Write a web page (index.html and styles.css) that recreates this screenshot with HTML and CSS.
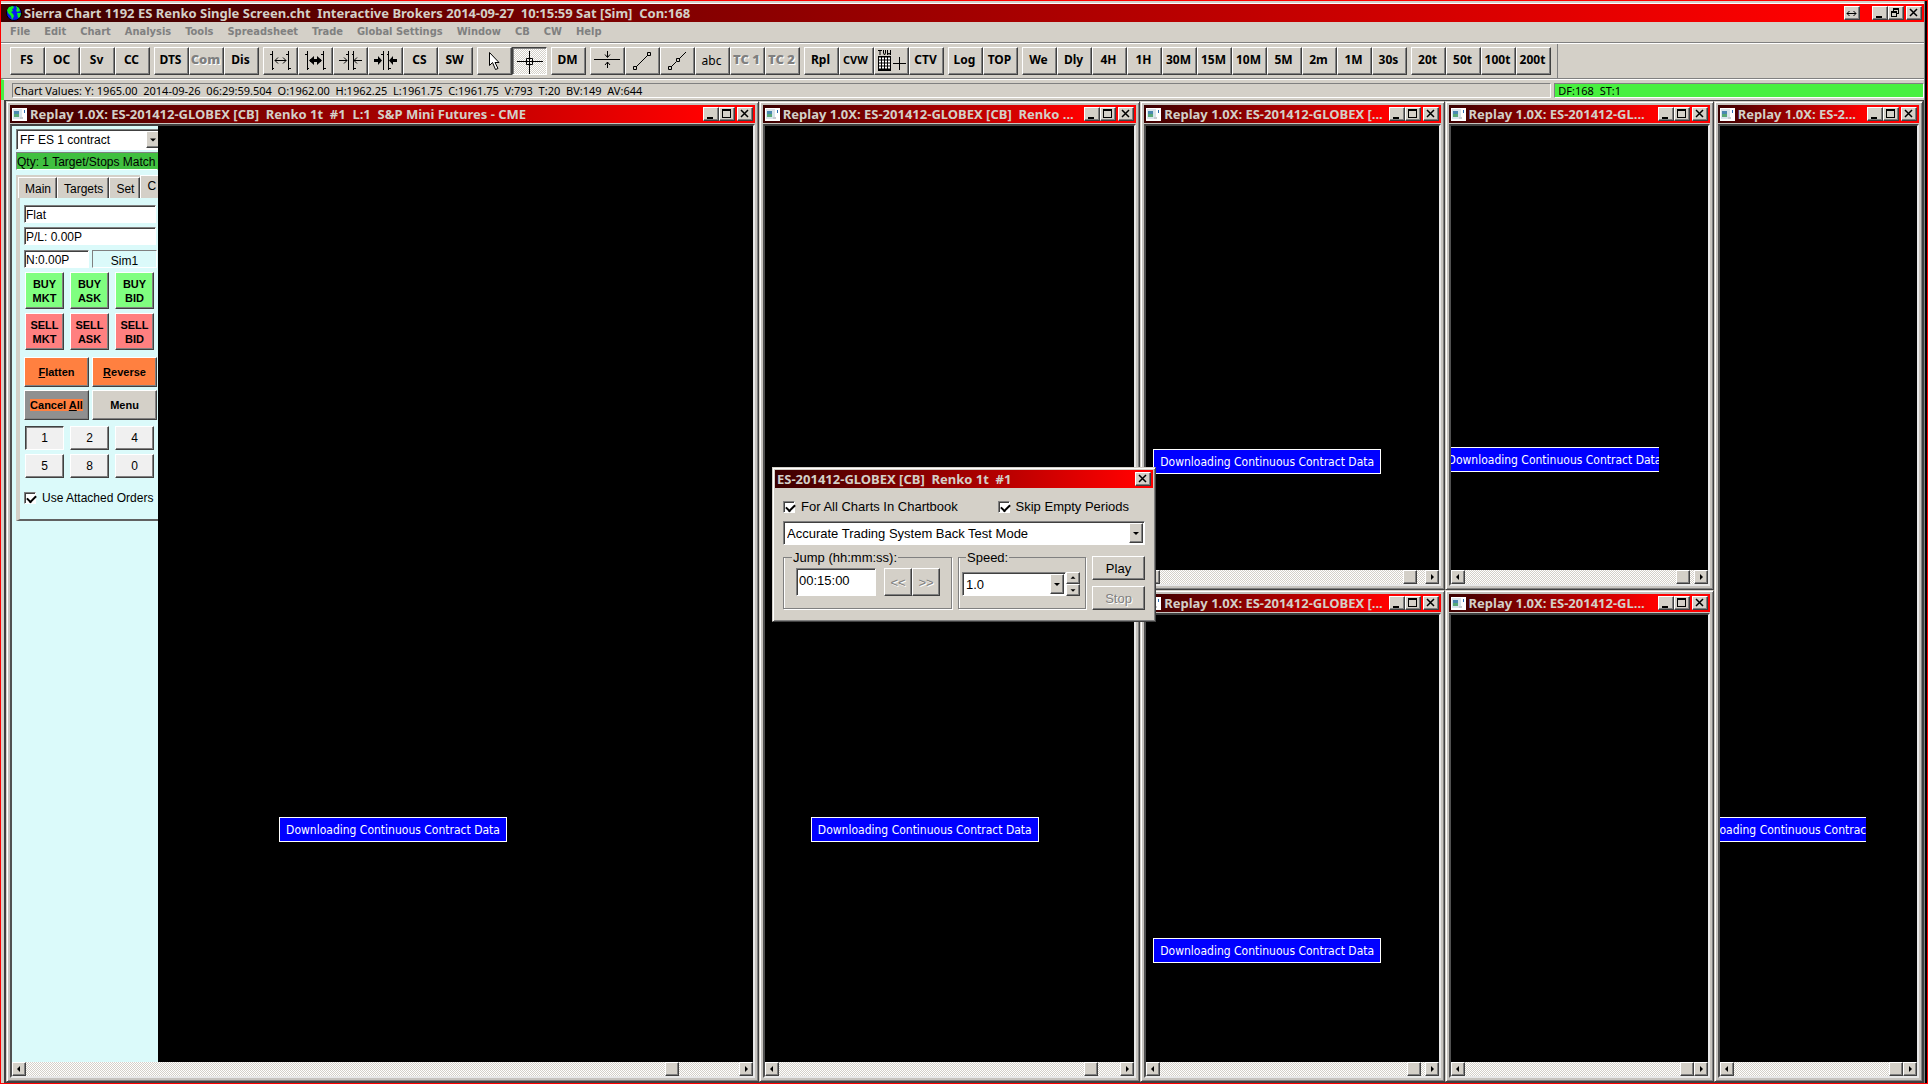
FILE: index.html
```
<!DOCTYPE html>
<html lang="en">
<head>
    <meta charset="UTF-8">
    <meta name="viewport" content="width=device-width, initial-scale=1.0">
    <title>Sierra Chart</title>
    <link rel="stylesheet" href="styles.css">
</head>
<body>
    <!-- shared icons -->
    <svg class="defs" width="0" height="0">
        <symbol id="min" viewBox="0 0 14 12"><path d="M3 9h6v2H3z"/></symbol>
        <symbol id="max" viewBox="0 0 14 12"><path d="M2 1h9v9H2zM3 3v6h7V3z" fill-rule="evenodd"/></symbol>
        <symbol id="restore" viewBox="0 0 14 12"><path d="M4 1h6v6H8v3H2V4h2zM5 3v1h3v2h1V3zM3 6v3h4V6z" fill-rule="evenodd"/></symbol>
        <symbol id="close" viewBox="0 0 14 12"><path d="M3 2l7 7M10 2l-7 7" stroke="#000" stroke-width="1.500"/></symbol>
        <symbol id="doc" viewBox="0 0 15 13"><path fill="#fff" d="M0 0h15v13H0z"/><path fill="#d8e4ec" d="M1 1h9v10H1z"/><path fill="#4a88b0" d="M2 3h5v4H2z"/><path fill="#58a878" d="M2 6h5v3H2z"/><path fill="#2c6cb0" d="M12 2h1v3h-1z"/><path fill="#c8ccd0" d="M8 9h3v2H8z"/></symbol>
        <symbol id="left" viewBox="0 0 12 12"><path d="M7 3v6L4 6z"/></symbol>
        <symbol id="right" viewBox="0 0 12 12"><path d="M5 3v6l3-3z"/></symbol>
        <symbol id="down" viewBox="0 0 12 12"><path d="M3 5h6L6 8z"/></symbol>
        <symbol id="up" viewBox="0 0 12 12"><path d="M3 7h6L6 4z"/></symbol>
    </svg>

    <div class="app">
        <header class="app-title">
            <svg class="globe" viewBox="0 0 16 16"><circle cx="8" cy="8" r="7.5" fill="#0818f0" stroke="#000"/><path fill="#10f020" d="M3 2l4-1 1 2-2 1 1 2-2 1 2 2 1 2-2 4-1-4-3-3-1-3zM10 1l3 2 1 3-3 1-1-2 1-1zM11 8l4 0-1 4-2 1z"/></svg>
            <h1>Sierra Chart 1192 ES Renko Single Screen.cht&nbsp; Interactive Brokers 2014-09-27&nbsp; 10:15:59 Sat [Sim]&nbsp; Con:168</h1>
            <button class="cap swap" aria-label="Move"><svg viewBox="0 0 14 12"><path d="M2 6.500h9M4.500 4L2 6.500 4.500 9M8.500 4L11 6.500 8.500 9" fill="none" stroke="#000"/></svg></button>
            <button class="cap" aria-label="Minimize"><svg><use href="#min"/></svg></button>
            <button class="cap" aria-label="Restore"><svg><use href="#restore"/></svg></button>
            <button class="cap last" aria-label="Close"><svg><use href="#close"/></svg></button>
        </header>

        <nav class="menu">
            <button>File</button>
            <button>Edit</button>
            <button>Chart</button>
            <button>Analysis</button>
            <button>Tools</button>
            <button>Spreadsheet</button>
            <button>Trade</button>
            <button>Global Settings</button>
            <button>Window</button>
            <button>CB</button>
            <button>CW</button>
            <button>Help</button>
        </nav>

        <div class="toolbar">
            <div class="tools">
                <button>FS</button><button>OC</button><button>Sv</button><button>CC</button>
            </div>
            <div class="tools">
                <button>DTS</button><button class="heavy" disabled>Com</button><button>Dis</button>
            </div>
            <div class="tools">
                <button aria-label="Widen bars"><svg viewBox="0 0 33 26"><path d="M6 6.500h2M8.500 3v19M8 20.500h2M22 6.500h2M24.500 3v19M25 20.500h2M11 12.500h11M14 9.500l-3 3 3 3M19 9.500l3 3-3 3"/></svg></button>
                <button aria-label="Widen bars fast"><svg viewBox="0 0 33 26"><path d="M6 6.500h2M8.500 3v19M8 20.500h2M22 6.500h2M24.500 3v19M25 20.500h2"/><path class="thick" d="M11 12.500h11"/><path class="solid" d="M15 8v9l-5-4.500zM18 8v9l5-4.500z"/></svg></button>
                <button aria-label="Narrow bars"><svg viewBox="0 0 33 26"><path d="M12 6.500h2M14.500 3v19M18 6.500h2M19.500 3v19M20 20.500h2M5 12.500h8M10 9.500l3 3-3 3M28 12.500h-8M23 9.500l-3 3 3 3"/></svg></button>
                <button aria-label="Narrow bars fast"><svg viewBox="0 0 33 26"><path d="M12 6.500h2M14.500 3v19M18 6.500h2M19.500 3v19M20 20.500h2"/><path class="thick" d="M5 12.500h5M28 12.500h-5"/><path class="solid" d="M9 8v9l4-4.500zM24 8v9l-4-4.500z"/></svg></button>
                <button>CS</button><button>SW</button>
            </div>
            <div class="tools">
                <button aria-label="Pointer"><svg viewBox="0 0 33 26"><path class="hollow" d="M11.500 4.500v13l3-3 3 7 2.500-1-3-6h4z"/></svg></button>
                <button class="pressed" aria-label="Cross hair"><svg viewBox="0 0 33 26"><path d="M4 13.500h26M16.500 3v23M13.500 10.500h6v6h-6z"/></svg></button>
            </div>
            <div class="tools">
                <button>DM</button>
            </div>
            <div class="tools">
                <button aria-label="Horizontal line"><svg viewBox="0 0 33 26"><path d="M3 11.500h26M16.500 3v6M14 6.500l2.500 3 2.500-3M16.500 20v-6M14 17l2.500-3 2.500 3"/></svg></button>
                <button aria-label="Line"><svg viewBox="0 0 33 26"><path d="M10 19L22 7M7.500 18.500h3v3h-3zM21.500 4.500h3v3h-3z"/></svg></button>
                <button aria-label="Ray"><svg viewBox="0 0 33 26"><path d="M10 19l5-5M18 11l7-7M7.500 18.500h3v3h-3zM15.500 10.500h3v3h-3z"/></svg></button>
                <button class="small">abc</button>
                <button class="heavy" disabled>TC 1</button><button class="heavy" disabled>TC 2</button>
            </div>
            <div class="tools">
                <button>Rpl</button><button class="cvw">CVW</button>
                <button aria-label="TVW"><svg viewBox="0 0 33 26"><path d="M3 2.500h4M5 2v5M8.500 2v3l1 2 1-2V2M12.500 2v5l1.500-2 1.500 2V2"/><path class="solid" d="M3 8h13v15H3z"/><path class="cells" d="M4 10.500h12M4 13.500h12M4 16.500h12M4 19.500h12"/><path d="M18 15.500h13M24.500 9v13"/></svg></button>
                <button>CTV</button>
            </div>
            <div class="tools">
                <button>Log</button><button>TOP</button>
            </div>
            <div class="tools">
                <button>We</button><button>Dly</button><button>4H</button><button>1H</button><button>30M</button><button>15M</button><button>10M</button><button>5M</button><button>2m</button><button>1M</button><button>30s</button>
            </div>
            <div class="tools">
                <button>20t</button><button>50t</button><button>100t</button><button>200t</button>
            </div>
        </div>

        <div class="status">
            <div class="values">Chart Values: Y: 1965.00&nbsp; 2014-09-26&nbsp; 06:29:59.504&nbsp; O:1962.00&nbsp; H:1962.25&nbsp; L:1961.75&nbsp; C:1961.75&nbsp; V:793&nbsp; T:20&nbsp; BV:149&nbsp; AV:644</div>
            <div class="feed">DF:168&nbsp; ST:1</div>
        </div>

        <main class="workspace">
            <section class="window tall">
                <header>
                    <svg class="doc"><use href="#doc"/></svg>
                    <h2>Replay 1.0X: ES-201412-GLOBEX [CB]&nbsp; Renko 1t&nbsp; #1&nbsp; L:1&nbsp; S&amp;P Mini Futures - CME</h2>
                    <button class="cap" aria-label="Minimize"><svg><use href="#min"/></svg></button>
                    <button class="cap" aria-label="Maximize"><svg><use href="#max"/></svg></button>
                    <button class="cap last" aria-label="Close"><svg><use href="#close"/></svg></button>
                </header>
                <div class="client">
                    <div class="view">
                        <form class="trade">
                            <div class="combo config">
                                <select aria-label="Trade configuration"><option>FF ES 1 contract</option></select>
                                <span class="drop"><svg><use href="#down"/></svg></span>
                            </div>
                            <div class="qty">Qty: 1 Target/Stops Match</div>
                            <div class="tabs">
                                <button type="button">Main</button><button type="button">Targets</button><button type="button">Set</button><button type="button" class="current">C</button>
                            </div>
                            <div class="pane">
                                <input class="field" type="text" aria-label="Position" value="Flat">
                                <input class="field" type="text" aria-label="Profit" value="P/L: 0.00P">
                                <div class="pair fields">
                                    <input class="field" type="text" aria-label="Net" value="N:0.00P">
                                    <div class="field account">Sim1</div>
                                </div>
                                <div class="orders">
                                    <button type="button" class="buy">BUY<br>MKT</button>
                                    <button type="button" class="buy">BUY<br>ASK</button>
                                    <button type="button" class="buy">BUY<br>BID</button>
                                    <button type="button" class="sell">SELL<br>MKT</button>
                                    <button type="button" class="sell">SELL<br>ASK</button>
                                    <button type="button" class="sell">SELL<br>BID</button>
                                </div>
                                <div class="pair actions">
                                    <button type="button" class="exit"><u>F</u>latten</button>
                                    <button type="button" class="exit"><u>R</u>everse</button>
                                    <button type="button" class="cancel"><span>Cancel <u>A</u>ll</span></button>
                                    <button type="button">Menu</button>
                                </div>
                                <div class="sizes">
                                    <button type="button" class="down">1</button>
                                    <button type="button">2</button>
                                    <button type="button">4</button>
                                    <button type="button">5</button>
                                    <button type="button">8</button>
                                    <button type="button">0</button>
                                </div>
                                <label class="check"><input type="checkbox" checked> Use Attached Orders</label>
                            </div>
                        </form>
                        <div class="chart"><div class="message main-chart">Downloading Continuous Contract Data</div></div>
                    </div>
                    <div class="scroll">
                        <button aria-label="Scroll left"><svg><use href="#left"/></svg></button>
                        <i class="thumb far"></i>
                        <button aria-label="Scroll right"><svg><use href="#right"/></svg></button>
                    </div>
                </div>
            </section>

            <section class="window tall">
                <header>
                    <svg class="doc"><use href="#doc"/></svg>
                    <h2>Replay 1.0X: ES-201412-GLOBEX [CB]&nbsp; Renko ...</h2>
                    <button class="cap" aria-label="Minimize"><svg><use href="#min"/></svg></button>
                    <button class="cap" aria-label="Maximize"><svg><use href="#max"/></svg></button>
                    <button class="cap last" aria-label="Close"><svg><use href="#close"/></svg></button>
                </header>
                <div class="client">
                    <div class="chart"><div class="message second">Downloading Continuous Contract Data</div></div>
                    <div class="scroll">
                        <button aria-label="Scroll left"><svg><use href="#left"/></svg></button>
                        <i class="thumb mid"></i>
                        <button aria-label="Scroll right"><svg><use href="#right"/></svg></button>
                    </div>
                </div>
            </section>

            <section class="window">
                <header>
                    <svg class="doc"><use href="#doc"/></svg>
                    <h2>Replay 1.0X: ES-201412-GLOBEX [...</h2>
                    <button class="cap" aria-label="Minimize"><svg><use href="#min"/></svg></button>
                    <button class="cap" aria-label="Maximize"><svg><use href="#max"/></svg></button>
                    <button class="cap last" aria-label="Close"><svg><use href="#close"/></svg></button>
                </header>
                <div class="client">
                    <div class="chart"><div class="message third">Downloading Continuous Contract Data</div></div>
                    <div class="scroll">
                        <button aria-label="Scroll left"><svg><use href="#left"/></svg></button>
                        <i class="thumb near"></i>
                        <button aria-label="Scroll right"><svg><use href="#right"/></svg></button>
                    </div>
                </div>
            </section>

            <section class="window">
                <header>
                    <svg class="doc"><use href="#doc"/></svg>
                    <h2>Replay 1.0X: ES-201412-GL...</h2>
                    <button class="cap" aria-label="Minimize"><svg><use href="#min"/></svg></button>
                    <button class="cap" aria-label="Maximize"><svg><use href="#max"/></svg></button>
                    <button class="cap last" aria-label="Close"><svg><use href="#close"/></svg></button>
                </header>
                <div class="client">
                    <div class="chart"><div class="message fourth">Downloading Continuous Contract Data</div></div>
                    <div class="scroll">
                        <button aria-label="Scroll left"><svg><use href="#left"/></svg></button>
                        <i class="thumb close"></i>
                        <button aria-label="Scroll right"><svg><use href="#right"/></svg></button>
                    </div>
                </div>
            </section>

            <section class="window tall">
                <header>
                    <svg class="doc"><use href="#doc"/></svg>
                    <h2>Replay 1.0X: ES-2...</h2>
                    <button class="cap" aria-label="Minimize"><svg><use href="#min"/></svg></button>
                    <button class="cap" aria-label="Maximize"><svg><use href="#max"/></svg></button>
                    <button class="cap last" aria-label="Close"><svg><use href="#close"/></svg></button>
                </header>
                <div class="client">
                    <div class="chart"><div class="message fifth">Downloading Continuous Contract Data</div></div>
                    <div class="scroll">
                        <button aria-label="Scroll left"><svg><use href="#left"/></svg></button>
                        <i class="thumb"></i>
                        <button aria-label="Scroll right"><svg><use href="#right"/></svg></button>
                    </div>
                </div>
            </section>

            <section class="window">
                <header>
                    <svg class="doc"><use href="#doc"/></svg>
                    <h2>Replay 1.0X: ES-201412-GLOBEX [...</h2>
                    <button class="cap" aria-label="Minimize"><svg><use href="#min"/></svg></button>
                    <button class="cap" aria-label="Maximize"><svg><use href="#max"/></svg></button>
                    <button class="cap last" aria-label="Close"><svg><use href="#close"/></svg></button>
                </header>
                <div class="client">
                    <div class="chart"><div class="message third">Downloading Continuous Contract Data</div></div>
                    <div class="scroll">
                        <button aria-label="Scroll left"><svg><use href="#left"/></svg></button>
                        <i class="thumb close"></i>
                        <button aria-label="Scroll right"><svg><use href="#right"/></svg></button>
                    </div>
                </div>
            </section>

            <section class="window">
                <header>
                    <svg class="doc"><use href="#doc"/></svg>
                    <h2>Replay 1.0X: ES-201412-GL...</h2>
                    <button class="cap" aria-label="Minimize"><svg><use href="#min"/></svg></button>
                    <button class="cap" aria-label="Maximize"><svg><use href="#max"/></svg></button>
                    <button class="cap last" aria-label="Close"><svg><use href="#close"/></svg></button>
                </header>
                <div class="client">
                    <div class="chart"></div>
                    <div class="scroll">
                        <button aria-label="Scroll left"><svg><use href="#left"/></svg></button>
                        <i class="thumb"></i>
                        <button aria-label="Scroll right"><svg><use href="#right"/></svg></button>
                    </div>
                </div>
            </section>

            <!-- replay control panel, floats over the charts -->
            <form class="replay">
                <header>
                    <h2>ES-201412-GLOBEX [CB]&nbsp; Renko 1t&nbsp; #1</h2>
                    <button type="button" class="cap last" aria-label="Close"><svg><use href="#close"/></svg></button>
                </header>
                <div class="body">
                    <div class="checks">
                        <label class="check"><input type="checkbox" checked> For All Charts In Chartbook</label>
                        <label class="check"><input type="checkbox" checked> Skip Empty Periods</label>
                    </div>
                    <div class="combo">
                        <select aria-label="Replay mode"><option>Accurate Trading System Back Test Mode</option></select>
                        <span class="drop"><svg><use href="#down"/></svg></span>
                    </div>
                    <div class="controls">
                        <fieldset class="jump">
                            <legend>Jump (hh:mm:ss):</legend>
                            <div class="row">
                                <input type="text" class="time" aria-label="Jump" value="00:15:00">
                                <button type="button" disabled>&lt;&lt;</button><button type="button" disabled>&gt;&gt;</button>
                            </div>
                        </fieldset>
                        <fieldset class="speed">
                            <legend>Speed:</legend>
                            <div class="row">
                                <div class="combo">
                                    <select aria-label="Speed"><option>1.0</option></select>
                                    <span class="drop"><svg><use href="#down"/></svg></span>
                                </div>
                                <div class="spin">
                                    <button type="button" aria-label="Faster"><svg><use href="#up"/></svg></button>
                                    <button type="button" aria-label="Slower"><svg><use href="#down"/></svg></button>
                                </div>
                            </div>
                        </fieldset>
                        <div class="run">
                            <button type="button">Play</button>
                            <button type="button" disabled>Stop</button>
                        </div>
                    </div>
                </div>
            </form>
        </main>
    </div>
</body>
</html>
```
FILE: styles.css
```
* {
    box-sizing: border-box;
}
body {
    margin: 0;
    height: 100vh;
    border: 1px solid #ff0000;
    background: #000;
    color: #000;
    font-family: "Liberation Sans", Arial, sans-serif;
    font-size: 12px;
    overflow: hidden;
}
.defs {
    position: absolute;
}
h1, h2 {
    margin: 0;
    font: bold 13px/18px "Noto Sans", sans-serif;
    color: #d4d0c8;
    white-space: nowrap;
}
button {
    margin: 0;
    padding: 0;
    font: inherit;
    color: #000;
    background: #d4d0c8;
    border: 1px solid;
    border-color: #fff #404040 #404040 #fff;
    box-shadow: inset -1px -1px #808080;
}
button svg, .drop svg {
    display: block;
    width: 100%;
    height: 100%;
}
.app {
    display: flex;
    flex-direction: column;
    height: 100%;
    margin-right: 2px;
    padding-top: 2px;
    background: #d4d0c8;
    border-right: 1px solid #808080;
}

/* title bars */
.app-title {
    display: flex;
    align-items: center;
    height: 19px;
    padding-left: 5px;
    border-top: 1px solid #fff;
    background: linear-gradient(to right, #3a0000, #ff0000 95%);
}
.app-title h1, .window h2, .replay h2 {
    flex: 1;
    min-width: 0;
    overflow: hidden;
}
.globe {
    width: 16px;
    height: 16px;
    margin-right: 2px;
}
.cap {
    flex: none;
    width: 16px;
    height: 14px;
}
.cap.last {
    margin: 0 2px;
}
.cap.swap {
    margin-right: 12px;
}

/* menu */
.menu {
    display: flex;
    gap: 14px;
    height: 21px;
    padding-left: 9px;
    border-bottom: 1px solid #808080;
}
.menu button {
    font: bold 11px/16px "DejaVu Sans Condensed", "DejaVu Sans", sans-serif;
    color: #808080;
    border: 0;
    box-shadow: none;
}

/* toolbar */
.toolbar {
    display: flex;
    gap: 4px;
    height: 36px;
    padding: 3px 0 0 9px;
    border-top: 1px solid #fff;
    border-bottom: 1px solid #808080;
}
.tools {
    display: flex;
    height: 28px;
}
.tools:last-child {
    box-sizing: content-box;
    margin-top: -3px;
    padding: 3px 6px 4px 0;
    border-right: 1px solid #808080;
}
.tools button {
    width: 35px;
    height: 28px;
    padding: 0 2px 4px 0;
    font: bold 12px "Noto Sans", sans-serif;
}
.tools button.small {
    padding-top: 3px;
    font-weight: normal;
}
.tools button.cvw {
    font-size: 11px;
}
.tools button.heavy {
    font-size: 13px;
    font-weight: 900;
    color: #808080;
    text-shadow: 1px 1px #fff;
}
.tools button svg {
    width: 33px;
    height: 26px;
    margin-bottom: -4px;
    fill: none;
    stroke: #000;
}
.tools .thick {
    stroke-width: 3;
}
.tools .solid {
    fill: #000;
    stroke: none;
}
.tools .hollow {
    fill: #fff;
}
.tools .cells {
    stroke: #fff;
    stroke-width: 2;
    stroke-dasharray: 2 1;
}
.tools .pressed {
    background: repeating-conic-gradient(#fff 0 25%, #d4d0c8 0 50%) 0 0 / 2px 2px;
    border-color: #404040 #fff #fff #404040;
    box-shadow: inset 1px 1px #808080;
}

/* status line */
.status {
    display: flex;
    gap: 3px;
    height: 21px;
    padding: 3px 0 2px 8px;
    border-top: 1px solid #fff;
    border-left: 3px solid #48f040;
    font: 11px/14px "Noto Sans", sans-serif;
}
.status div {
    padding-left: 1px;
    border: 1px solid;
    border-color: #808080 #fff #fff #808080;
    white-space: nowrap;
}
.values {
    flex: 1542;
}
.status .feed {
    flex: 366;
    padding-left: 3px;
    background: #48f040;
}

/* chart windows */
.workspace {
    position: relative;
    flex: 1;
    min-height: 0;
    display: grid;
    grid-template-columns: 752fr 381fr 304fr 269fr 209fr;
    grid-template-rows: 489fr 492fr;
    margin-left: 3px;
    border: 1px solid #404040;
    border-width: 1px 1px 1px 2px;
}
.tall {
    grid-row: span 2;
}
.window {
    display: flex;
    flex-direction: column;
    min-width: 0;
    min-height: 0;
    padding: 3px;
    border: 1px solid;
    border-color: #d4d0c8 #404040 #404040 #d4d0c8;
    box-shadow: inset 1px 1px #fff, inset -1px -1px #808080;
    background: #c6c3be;
}
.window header {
    display: flex;
    align-items: center;
    height: 18px;
    flex: none;
    margin-bottom: 1px;
    padding-left: 2px;
    background: linear-gradient(to right, #3a0000, #ff0000 calc(100% - 54px));
}
.doc {
    flex: none;
    width: 15px;
    height: 13px;
    margin-right: 3px;
}
.client {
    flex: 1;
    min-height: 0;
    display: flex;
    flex-direction: column;
    border: 2px solid;
    border-color: #404040 #e8e8e8 #e8e8e8 #505050;
}
.view {
    flex: 1;
    min-height: 0;
    display: flex;
}
.chart {
    position: relative;
    flex: 1;
    min-width: 0;
    background: #000;
    overflow: hidden;
}
.message {
    position: absolute;
    display: flex;
    justify-content: center;
    width: 228px;
    height: 25px;
    border: 1px solid #fff;
    background: #0000ff;
    color: #fff;
    font: 12px/24px "DejaVu Sans Condensed", "DejaVu Sans", sans-serif;
    white-space: nowrap;
    overflow: hidden;
}
.main-chart {
    left: 121px;
    top: 691px;
}
.second {
    left: 46px;
    top: 691px;
}
.third {
    left: 7px;
    top: 323px;
}
.fourth {
    left: 0;
    top: 321px;
    width: 208px;
    border-width: 1px 0;
}
.fifth {
    left: 0;
    top: 691px;
    width: 146px;
    border-width: 1px 0;
}
.scroll {
    display: flex;
    justify-content: space-between;
    height: 14px;
    flex: none;
    background: repeating-conic-gradient(#fff 0 25%, #d4d0c8 0 50%) 0 0 / 2px 2px;
}
.scroll button, .thumb {
    width: 14px;
    height: 14px;
}
.thumb {
    margin-left: auto;
    background: #d4d0c8;
    border: 1px solid;
    border-color: #fff #404040 #404040 #fff;
    box-shadow: inset -1px -1px #808080;
}
.thumb.close {
    margin-right: 4px;
}
.thumb.near {
    margin-right: 8px;
}
.thumb.mid {
    margin-right: 22px;
}
.thumb.far {
    margin-right: 60px;
}

/* form parts */
select, input[type="text"], .field {
    min-width: 0;
    margin: 0;
    padding: 0 1px;
    font: inherit;
    color: #000;
    background: #fff;
    border: 1px solid;
    border-color: #808080 #fff #fff #808080;
    border-radius: 0;
    box-shadow: inset 1px 1px #404040;
}
.combo {
    display: flex;
    border: 1px solid;
    border-color: #808080 #fff #fff #808080;
    background: #fff;
    box-shadow: inset 1px 1px #404040;
    padding: 1px;
}
.combo select {
    flex: 1;
    appearance: none;
    padding-left: 2px;
    border: 0;
    box-shadow: none;
    background: none;
}
.drop {
    width: 14px;
    background: #d4d0c8;
    border: 1px solid;
    border-color: #fff #404040 #404040 #fff;
    box-shadow: inset -1px -1px #808080;
}
.check {
    display: flex;
    align-items: center;
    gap: 6px;
    white-space: nowrap;
}
.check input {
    appearance: none;
    width: 12px;
    height: 12px;
    margin: 0;
    background: #fff;
    border: 1px solid;
    border-color: #808080 #fff #fff #808080;
    box-shadow: inset 1px 1px #404040;
}
.check input:checked::after {
    content: "";
    display: block;
    width: 7px;
    height: 4px;
    margin: 2px 0 0 2px;
    border: solid #000;
    border-width: 0 0 2px 2px;
    transform: rotate(-45deg);
}

/* trade panel */
.trade {
    width: 146px;
    flex: none;
    padding: 3px 0 0 4px;
    background: #dbfafa;
    overflow: hidden;
}
.config {
    height: 21px;
    margin-right: -4px;
}
.qty {
    height: 18px;
    margin-top: 2px;
    border: 1px solid;
    border-color: #808080 transparent #fff #808080;
    background: #40c040;
    line-height: 18px;
    white-space: nowrap;
}
.tabs {
    display: flex;
    align-items: flex-end;
    height: 23px;
    margin-top: 5px;
    padding-left: 2px;
    background: #d4d0c8;
}
.tabs button {
    flex: none;
    height: 21px;
    padding: 2px 5px 0 6px;
    border-width: 1px 1px 0 1px;
    box-shadow: inset -1px 0 #808080;
}
.tabs .current {
    height: 23px;
    padding: 0 6px 3px;
}
.pane {
    display: flex;
    flex-direction: column;
    height: 323px;
    padding: 7px 0 0 4px;
    border-left: 4px solid #d4d0c8;
    border-bottom: 2px solid #606060;
}
.pane > .field, .fields {
    width: 132px;
}
.pane .field {
    height: 18px;
    margin-bottom: 4px;
    line-height: 16px;
    padding-top: 2px;
}
.pair {
    display: grid;
    grid-template-columns: 65px 65px;
    gap: 3px;
}
.fields {
    margin-top: 1px;
}
.pane .account {
    background: #dbfafa;
    text-align: center;
    box-shadow: none;
}
.orders, .sizes {
    display: grid;
    grid-template-columns: 39px 39px 39px;
    gap: 4px 6px;
    padding-left: 1px;
}
.orders button {
    height: 37px;
    font: bold 11px/14px "Liberation Sans", Arial, sans-serif;
}
.orders .buy {
    background: #80ff80;
}
.orders .sell {
    background: #ff8080;
}
.actions {
    margin-top: 7px;
}
.actions button {
    height: 30px;
    font: bold 11px "Liberation Sans", Arial, sans-serif;
}
.actions .exit, .cancel span {
    background: #ff8040;
}
.actions .cancel {
    background: #909090;
}
.sizes {
    margin-top: 6px;
}
.sizes button {
    height: 24px;
    background: #f0f0f0;
}
.sizes .down {
    border-color: #404040 #fff #fff #404040;
    box-shadow: inset 1px 1px #808080;
}
.pane .check {
    margin-top: 13px;
}

/* replay dialog */
.replay {
    position: absolute;
    left: 766px;
    top: 366px;
    width: 384px;
    padding: 2px;
    border: 1px solid;
    border-color: #d4d0c8 #404040 #404040 #d4d0c8;
    box-shadow: inset 1px 1px #fff, inset -1px -1px #808080;
    background: #d4d0c8;
    font-size: 13px;
}
.replay header {
    display: flex;
    align-items: center;
    height: 18px;
    padding-left: 2px;
    background: linear-gradient(to right, #3a0000, #ff0000 95%);
}
.replay .body {
    padding: 11px 8px 9px 8px;
}
.checks {
    display: flex;
    justify-content: space-between;
    height: 15px;
    padding-right: 16px;
}
.body > .combo {
    height: 24px;
    margin: 7px 0 5px;
}
.controls {
    display: flex;
    gap: 6px;
}
fieldset {
    min-width: 0;
    height: 59px;
    margin: 0;
    padding: 0 0 0 12px;
    border: 1px solid #808080;
    box-shadow: inset 1px 0 #fff, 1px 1px #fff;
}
legend {
    margin-left: -4px;
    padding: 0 1px;
    line-height: 15px;
}
.jump {
    width: 169px;
}
.speed {
    width: 128px;
    padding-left: 3px;
}
.row {
    display: flex;
    padding-top: 3px;
}
.jump .time {
    width: 80px;
    height: 28px;
    margin-right: 8px;
    padding: 0 2px 4px;
}
.jump .row button {
    width: 28px;
    height: 28px;
}
.speed legend {
    margin-left: 4px;
}
.speed .row {
    padding-top: 7px;
}
.speed .combo {
    width: 104px;
    height: 24px;
}
.spin {
    display: flex;
    flex-direction: column;
    width: 14px;
}
.spin button {
    height: 12px;
}
.replay button:disabled {
    color: #808080;
    text-shadow: 1px 1px #fff;
}
.run {
    flex: 1;
    display: flex;
    flex-direction: column;
    gap: 6px;
    padding-top: 6px;
}
.run button {
    height: 24px;
}
```
